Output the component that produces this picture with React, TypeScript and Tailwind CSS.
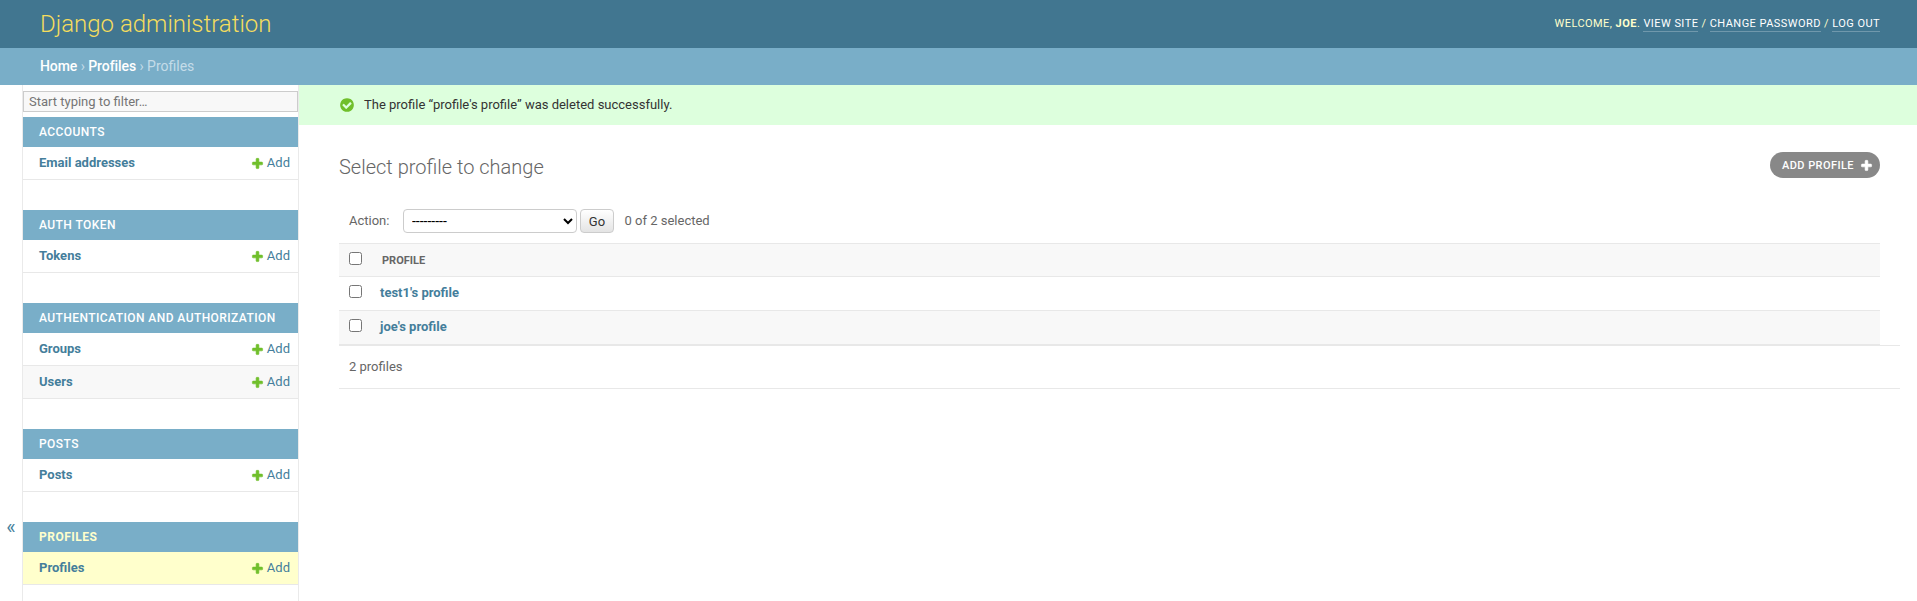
import React from "react";

type App = { name: string; models: string[]; current?: boolean };

const apps: App[] = [
  { name: "Accounts", models: ["Email addresses"] },
  { name: "Auth Token", models: ["Tokens"] },
  { name: "Authentication and Authorization", models: ["Groups", "Users"] },
  { name: "Posts", models: ["Posts"] },
  { name: "Profiles", models: ["Profiles"], current: true },
];

const profiles = ["test1's profile", "joe's profile"];

function PlusIcon({ className, size }: { className: string; size: number }) {
  return (
    <svg className={className} width={size} height={size} viewBox="0 0 1792 1792" fill="currentColor" stroke="currentColor" strokeWidth="80">
      <path d="M1600 796v192q0 40-28 68t-68 28h-416v416q0 40-28 68t-68 28h-192q-40 0-68-28t-28-68v-416h-416q-40 0-68-28t-28-68v-192q0-40 28-68t68-28h416v-416q0-40 28-68t68-28h192q40 0 68 28t28 68v416h416q40 0 68 28t28 68z" />
    </svg>
  );
}

function SuccessIcon() {
  return (
    <svg className="shrink-0 text-[#70bf2b]" width="16" height="16" viewBox="0 0 1792 1792" fill="currentColor">
      <path d="M1412 734q0-28-18-46l-91-90q-19-19-45-19t-45 19l-408 407-226-226q-19-19-45-19t-45 19l-91 90q-18 18-18 46 0 27 18 45l362 362q19 19 45 19 27 0 46-19l543-543q18-18 18-45zm252 162q0 209-103 385.500t-279.500 279.500-385.500 103-385.500-103-279.500-279.500-103-385.500 103-385.500 279.500-279.500 385.500-103 385.500 103 279.500 279.500 103 385.500z" />
    </svg>
  );
}

function Header() {
  const link = "border-b border-white/25 pb-px text-white";
  return (
    <header className="flex h-12 shrink-0 items-center justify-between bg-[#417690] pl-10 pr-[37px] text-[#ffc]">
      <h1 className="text-[24px] font-light leading-6 text-[#f5dd5d]">Django administration</h1>
      <div className="text-[11px] uppercase leading-[14px] tracking-[0.45px]">
        Welcome, <strong className="font-bold">joe</strong>. <a className={link}>View site</a> / <a className={link}>Change password</a> /{" "}
        <a className={link}>Log out</a>
      </div>
    </header>
  );
}

function Sidebar() {
  return (
    <nav className="flex h-full w-[276px] shrink-0 flex-col border-r border-[#eaeaea] pt-1.5">
      <input
        className="mb-[5px] block h-[21px] w-full shrink-0 border border-[#ccc] bg-[#f8f8f8] px-[5px] text-[13px] text-[#333] placeholder:text-[#757575]"
        placeholder="Start typing to filter…"
      />
      {apps.map((app) => (
        <section key={app.name} className="mb-[30px] shrink-0">
          <h2
            className={
              app.current
                ? "h-[30px] bg-[#79aec8] pl-4 text-[12px] font-bold uppercase leading-[30px] tracking-[0.5px] text-[#ffc]"
                : "h-[30px] bg-[#79aec8] pl-4 text-[12px] font-medium uppercase leading-[30px] tracking-[0.43px] text-white"
            }
          >
            {app.name}
          </h2>
          {app.models.map((model, i) => (
            <div
              key={model}
              className={
                app.current
                  ? "flex h-[33px] items-center border-b border-[#e8e8e8] bg-[#ffc] pl-4 pr-2 text-[13px] text-[#447e9b]"
                  : i % 2
                    ? "flex h-[33px] items-center border-b border-[#e8e8e8] bg-[#f8f8f8] pl-4 pr-2 text-[13px] text-[#447e9b]"
                    : "flex h-[33px] items-center border-b border-[#e8e8e8] pl-4 pr-2 text-[13px] text-[#447e9b]"
              }
            >
              <a className="flex-1 font-bold">{model}</a>
              <PlusIcon className="mr-[3px] text-[#70bf2b]" size={13} />
              <a>Add</a>
            </div>
          ))}
        </section>
      ))}
    </nav>
  );
}

function ChangeList() {
  return (
    <div className="pl-10 pr-[37px] pt-[27px]">
      <div className="flex h-[26px] items-start justify-between">
        <h1 className="mt-[3px] text-[20px] font-light leading-6 text-[#666]">Select profile to change</h1>
        <a className="flex h-[26px] items-center rounded-full bg-[#888] pl-3 pr-[7px] text-[11px] font-medium uppercase leading-[11px] tracking-[0.43px] text-white">
          Add profile
          <PlusIcon className="ml-1.5 mt-px" size={13} />
        </a>
      </div>
      <div className="mt-[31px] flex h-6 items-center pl-2.5 text-[13px] text-[#666]">
        <label className="w-[54px]">Action:</label>
        <select className="h-6 w-[174px] rounded border border-[#ccc] bg-white pl-1 text-[14px] text-black">
          <option>---------</option>
        </select>
        <button className="ml-[3px] h-6 w-[34px] rounded border border-[#ccc] bg-linear-to-b from-white to-[#e4e4e4] pt-px text-[13px] leading-none text-[#333]">
          Go
        </button>
        <span className="ml-[10.5px]">0 of 2 selected</span>
      </div>
      <table className="mt-2.5 w-full table-fixed border-collapse text-left">
        <thead>
          <tr className="h-[33px] border-y border-[#e8e8e8] bg-[#f8f8f8]">
            <th className="w-[41px] p-0 pl-2.5 align-top">
              <input type="checkbox" className="mt-2 block size-[13px]" />
            </th>
            <th className="p-0 pl-0.5 pt-px text-[11px] font-bold uppercase leading-none text-[#666]">Profile</th>
          </tr>
        </thead>
        <tbody>
          {profiles.map((profile, i) => (
            <tr
              key={profile}
              className={
                i % 2
                  ? "h-[34px] border-b border-[#e8e8e8] bg-[#f8f8f8]"
                  : "h-[34px] border-b border-[#e8e8e8]"
              }
            >
              <td className="p-0 pl-2.5 align-top">
                <input type="checkbox" className="mt-2 block size-[13px]" />
              </td>
              <td className="p-0 pb-px text-[13px] font-bold text-[#447e9b]">{profile}</td>
            </tr>
          ))}
        </tbody>
      </table>
      <p className="-mr-5 flex h-11 items-center border-y border-[#e8e8e8] pl-2.5 text-[13px] text-[#666]">2 profiles</p>
    </div>
  );
}

export default function App() {
  return (
    <div className="flex h-screen flex-col overflow-hidden bg-white font-['Roboto',sans-serif] text-[13px] text-[#333]">
      <Header />
      <div className="flex h-[37px] shrink-0 items-center gap-[3.4px] bg-[#79aec8] pl-10 text-[14px] text-[#c4dce8]">
        <a className="font-medium tracking-[-0.08px] text-white">Home</a>›
        <a className="font-medium tracking-[-0.08px] text-white">Profiles</a>›<span>Profiles</span>
      </div>
      <div className="flex min-h-0 flex-1">
        <button className="flex w-[23px] shrink-0 justify-center border-r border-[#eaeaea] pt-[430px] text-[20px] leading-6 text-[#447e9b]">
          «
        </button>
        <Sidebar />
        <main className="min-w-0 flex-1">
          <div className="flex h-10 items-center gap-[9px] bg-[#dfd] pl-10 text-[13px]">
            <SuccessIcon />
            The profile “profile's profile” was deleted successfully.
          </div>
          <ChangeList />
        </main>
      </div>
    </div>
  );
}
